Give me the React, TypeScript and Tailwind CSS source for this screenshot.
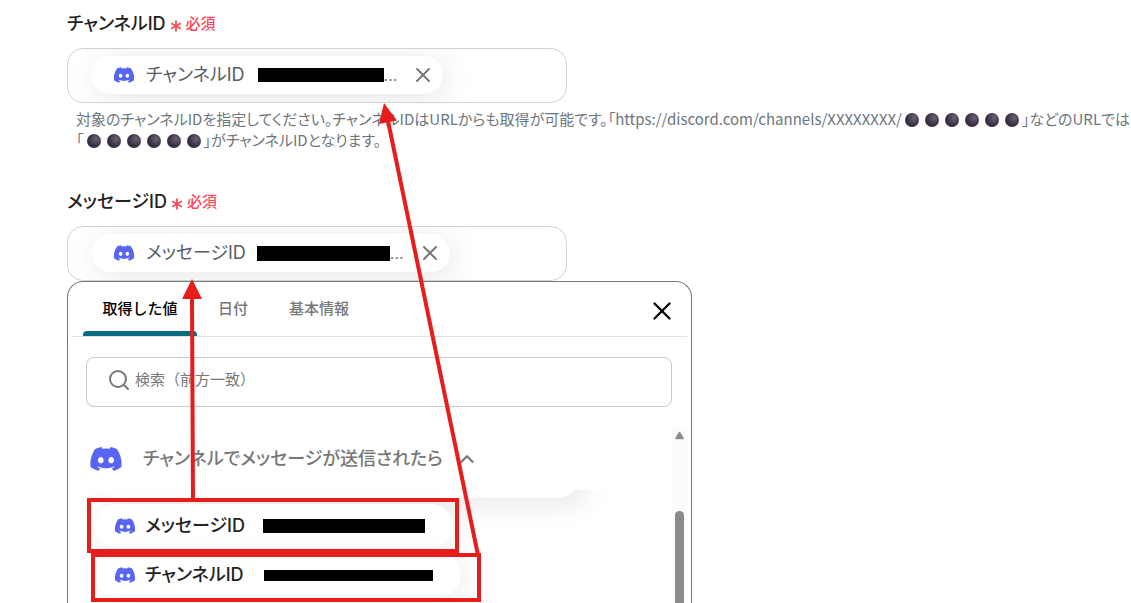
import React from 'react';
import { ChevronUp, Search, X } from 'lucide-react';
import { FaDiscord } from 'react-icons/fa';

const tabs = ['取得した値', '日付', '基本情報'];

const MaskedId = () => (
  <>
    {[0, 1, 2, 3, 4, 5].map((i) => (
      <span
        key={i}
        className="inline-block size-[14px] mx-[3px] rounded-full align-[-2px] bg-[radial-gradient(circle_at_65%_35%,#6a6272,#3b3044_55%,#2c2235)]"
      />
    ))}
  </>
);

const FieldLabel = ({ text }: { text: string }) => (
  <div className="flex h-6 items-center gap-1">
    <h2 className="text-lg font-medium text-[#222222]">{text}</h2>
    <span className="flex items-center gap-1 text-[15px] font-medium text-[#ff4757]">
      <svg className="mt-[3px] size-3" viewBox="0 0 12 12" stroke="currentColor" strokeWidth="1.8" aria-hidden="true">
        <path d="M6 0.5V11.5M1.2 3.2L10.8 8.8M10.8 3.2L1.2 8.8" />
      </svg>
      必須
    </span>
  </div>
);

const ValueField = ({ text, barClass }: { text: string; barClass: string }) => (
  <div className="flex h-[55px] w-full max-w-[500px] items-start overflow-hidden rounded-2xl border border-[#cdd3da] pt-[7px] pl-[23px]">
    <div className="flex h-[38px] items-center rounded-full bg-white pr-2 pl-[22px] text-[#555d66] shadow-[4px_4px_30px_rgba(0,0,0,0.1)]">
      <FaDiscord className="size-[22px] text-[#5865f2]" />
      <span className="ml-[11px] text-lg">{text}</span>
      <span className={barClass} />
      <span className="text-base text-[#777777]">...</span>
      <button type="button" aria-label={`${text}を削除`} className="ml-[14px] text-[#777777]">
        <X size={24} strokeWidth={2} />
      </button>
    </div>
  </div>
);

const ValueOption = ({ text, barClass }: { text: string; barClass: string }) => (
  <button
    type="button"
    className="flex h-11 items-center self-start rounded-full bg-white pr-7 pl-[19px] shadow-[4px_4px_24px_rgba(0,0,0,0.07)]"
  >
    <FaDiscord className="size-[22px] text-[#5865f2]" />
    <span className="ml-[9px] text-lg font-medium text-[#222222]">{text}</span>
    <span className={barClass} />
  </button>
);

const ValuePicker = () => (
  <div className="w-full max-w-[625px] rounded-t-2xl border border-b-0 border-[#777777] bg-white pr-1 pl-[3px]">
    <div className="flex h-[55px] items-stretch border-b border-[#e2e2e2] pl-3 [font-feature-settings:normal]">
      {tabs.map((tab, i) => (
        <button
          key={tab}
          type="button"
          className={
            i === 0
              ? 'relative w-[114px] text-[15px] font-medium text-black'
              : 'pr-5 pl-[21px] text-[15px] font-medium text-[#777777]'
          }
        >
          {tab}
          {i === 0 && <span className="absolute inset-x-0 bottom-0 h-[5px] rounded-t bg-[#0b6b82]" />}
        </button>
      ))}
      <button type="button" aria-label="閉じる" className="mr-[10px] ml-auto pt-1 text-black">
        <X size={30} strokeWidth={1.8} />
      </button>
    </div>

    <div className="mx-[15px] mt-5 flex h-[50px] items-center rounded-lg border border-[#c8c8c8] pb-1 pl-5">
      <label htmlFor="value-search" aria-label="検索">
        <Search size={24} strokeWidth={2} className="text-[#777777]" />
      </label>
      <input
        id="value-search"
        type="text"
        placeholder="検索（前方一致）"
        className="ml-1 min-w-0 flex-1 text-[15px] text-[#222222] outline-none [font-feature-settings:normal] placeholder:text-[#777777]"
      />
    </div>

    <div className="mt-5 flex h-44 overflow-hidden">
      <div className="flex flex-1 flex-col">
        <div className="z-10 flex h-[63px] shrink-0 items-center bg-white pl-[18px]">
          <FaDiscord className="size-[34px] text-[#5865f2]" />
          <h3 className="ml-5 text-lg font-medium text-[#777777]">チャンネルでメッセージが送信されたら</h3>
          <ChevronUp size={22} strokeWidth={2.5} className="ml-[13px] text-[#777777]" />
        </div>
        <div className="-mt-9 mr-[92px] ml-6 h-11 shrink-0 rounded-full bg-white shadow-[8px_8px_28px_rgba(0,0,0,0.09)]" />
        <div className="mt-[6px] flex flex-col gap-[5px] pl-6">
          <ValueOption text="メッセージID" barClass="ml-[18px] h-[14px] w-[162px] bg-black" />
          <ValueOption text="チャンネルID" barClass="ml-[20px] h-[11px] w-[169px] bg-black" />
        </div>
      </div>
      <div className="flex w-[15px] flex-col items-center bg-[#fbfbfb] pt-1">
        <svg className="h-[9px] w-[9px] shrink-0" viewBox="0 0 9 9" aria-hidden="true">
          <path d="M4.5 1.5L8 7.5H1Z" fill="#8b8b8b" stroke="#8b8b8b" strokeWidth="1.5" strokeLinejoin="round" />
        </svg>
        <span className="mt-[71px] w-[9px] flex-1 rounded-t-full bg-[#8b8b8b]" />
      </div>
    </div>
  </div>
);

// Red frames and arrows that link each picked value to its field
const Annotations = () => (
  <svg
    className="pointer-events-none absolute top-0 left-0 z-20"
    width="500"
    height="603"
    viewBox="0 0 500 603"
    fill="none"
    stroke="#e71c1c"
    strokeWidth="4"
    aria-hidden="true"
  >
    <rect x="89" y="500" width="368" height="51" />
    <rect x="93" y="555" width="386" height="45" />
    <path d="M193 500L192 298M478 555L388 121" />
    <path d="M192 279L202 299H182ZM384 103L397 120.500L379 124Z" fill="#e71c1c" stroke="none" />
  </svg>
);

const App = () => {
  return (
    <div className="relative overflow-hidden bg-white pt-3 pl-[67px] font-['Inter','Noto_Sans_CJK_JP',sans-serif] [font-feature-settings:'palt']">
      <section>
        <FieldLabel text="チャンネルID" />
        <div className="mt-3">
          <ValueField text="チャンネルID" barClass="ml-[13px] h-[14px] w-[126px] bg-black" />
        </div>
        <p className="mt-[5px] pl-[9px] font-['Noto_Sans_CJK_JP',sans-serif] text-[15px] leading-[21px] whitespace-nowrap text-[#6c757d]">
          対象のチャンネルIDを指定してください。チャンネルIDはURLからも取得が可能です。「https://discord.com/channels/XXXXXXXX/
          <MaskedId />
          」などのURLでは
          <br />
          「<MaskedId />
          」がチャンネルIDとなります。
        </p>
      </section>

      <section className="mt-10">
        <FieldLabel text="メッセージID" />
        <div className="mt-3">
          <ValueField text="メッセージID" barClass="ml-[11px] h-[15px] w-[133px] bg-black" />
        </div>
        <ValuePicker />
      </section>

      <Annotations />
    </div>
  );
};

export default App;
